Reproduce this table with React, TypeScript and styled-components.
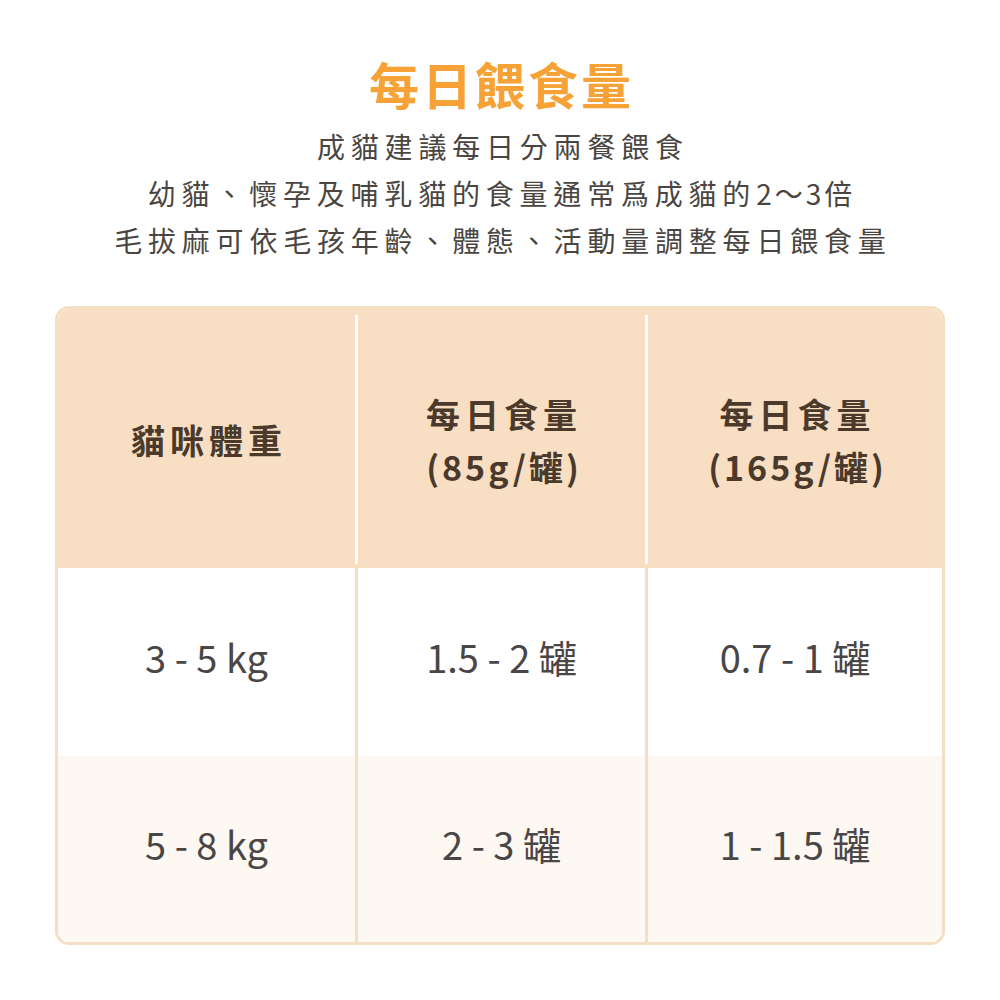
import React from "react";
import styled, { createGlobalStyle } from "styled-components";

const GlobalStyle = createGlobalStyle`
  html, body {
    margin: 0;
    padding: 0;
    background: #ffffff;
  }
  body {
    font-family: "Noto Sans CJK TC", "Noto Sans", sans-serif;
  }
`;

const Page = styled.div`
  width: 1000px;
  height: 1000px;
  box-sizing: border-box;
  padding-top: 53px;
  display: flex;
  flex-direction: column;
  align-items: center;
`;

const Title = styled.h1`
  margin: 0;
  font-size: 50px;
  line-height: 60px;
  font-weight: 700;
  color: #f6a237;
  letter-spacing: 3px;
  padding-left: 3px;
`;

const Intro = styled.div`
  margin-top: 10px;
  text-align: center;
  font-size: 28px;
  line-height: 47px;
  font-weight: 400;
  color: #4a4541;
  letter-spacing: 5.8px;
  padding-left: 5.8px;
`;

const Tight = styled.span`
  letter-spacing: 3px;
`;

const Table = styled.div`
  margin-top: 42px;
  width: 890px;
  box-sizing: border-box;
  border: 3px solid #f5dfc4;
  border-radius: 14px;
  overflow: hidden;
`;

const Row = styled.div<{ $bg: string; $h: number; $head?: boolean }>`
  display: grid;
  grid-template-columns: 297px 290px 297px;
  height: ${(p) => p.$h}px;
  box-sizing: border-box;
  background: ${(p) => p.$bg};
  padding: ${(p) => (p.$head ? "6px 0 4px" : "0")};
`;

const Cell = styled.div<{ $line?: string; $head?: boolean }>`
  display: flex;
  flex-direction: column;
  align-items: center;
  justify-content: center;
  text-align: center;
  box-sizing: border-box;
  border-left: ${(p) => (p.$line ? `3px solid ${p.$line}` : "none")};
  color: ${(p) => (p.$head ? "#4b3a2c" : "#4a4646")};
  font-size: ${(p) => (p.$head ? "34px" : "38px")};
  font-weight: ${(p) => (p.$head ? 700 : 400)};
  letter-spacing: ${(p) => (p.$head ? "5px" : "0")};
  line-height: ${(p) => (p.$head ? "53px" : "1.2")};
  padding-left: ${(p) => (p.$head ? "5px" : "0")};
  padding-bottom: ${(p) => (p.$head ? "0" : "10px")};
`;

const Unit = styled.span`
  letter-spacing: 3px;
`;

const rows = [
  { weight: "3 - 5 kg", small: "1.5 - 2 罐", large: "0.7 - 1 罐", bg: "#ffffff", h: 188 },
  { weight: "5 - 8 kg", small: "2 - 3 罐", large: "1 - 1.5 罐", bg: "#fdf8f2", h: 186 },
];

export default function App() {
  return (
    <Page>
      <GlobalStyle />
      <Title>每日餵食量</Title>
      <Intro>
        成貓建議每日分兩餐餵食
        <br />
        幼貓、懷孕及哺乳貓的食量通常爲成貓的<Tight>2～3</Tight>倍
        <br />
        毛拔麻可依毛孩年齡、體態、活動量調整每日餵食量
      </Intro>
      <Table>
        <Row $bg="#f8dfc3" $h={259} $head>
          <Cell $head>貓咪體重</Cell>
          <Cell $head $line="#ffffff">
            <span>每日食量</span>
            <Unit>(85g/罐)</Unit>
          </Cell>
          <Cell $head $line="#ffffff">
            <span>每日食量</span>
            <Unit>(165g/罐)</Unit>
          </Cell>
        </Row>
        {rows.map((r) => (
          <Row key={r.weight} $bg={r.bg} $h={r.h}>
            <Cell>{r.weight}</Cell>
            <Cell $line="#f5dfc4">{r.small}</Cell>
            <Cell $line="#f5dfc4">{r.large}</Cell>
          </Row>
        ))}
      </Table>
    </Page>
  );
}
